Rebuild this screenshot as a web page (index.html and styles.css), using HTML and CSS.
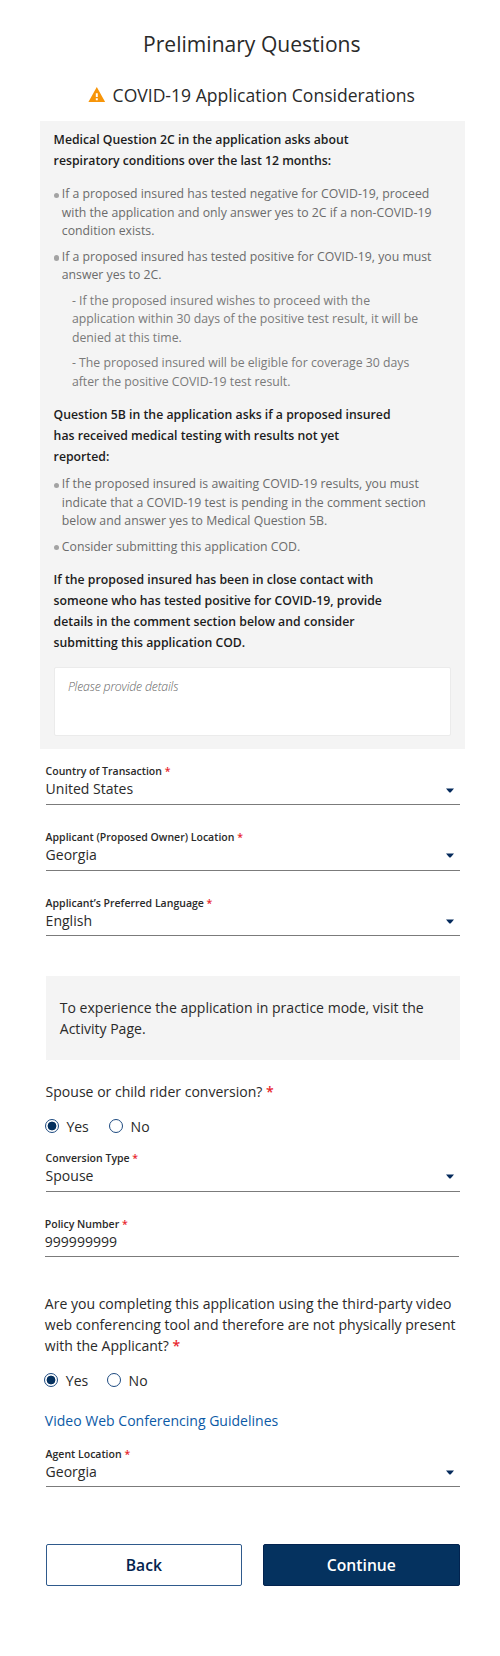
FILE: index.html
```html
<!DOCTYPE html>
<html lang="en">
<head>
<meta charset="utf-8">
<title>Preliminary Questions</title>
<link rel="stylesheet" href="styles.css">
</head>
<body>
<main class="page">
  <h1 class="title">Preliminary Questions</h1>
  <h2 class="heading">
    <svg class="warn" viewBox="0 0 18 16" aria-hidden="true"><path fill="#f79509" fill-rule="evenodd" d="M9 0 18 16H0ZM8 6.2V10.2H10V6.2ZM8 11.5V13.5H10V11.5Z"/></svg>
    <span>COVID-19 Application Considerations</span>
  </h2>

  <section class="panel">
    <p class="lead">Medical Question 2C in the application asks about<br>respiratory conditions over the last 12 months:</p>
    <ul class="list list-first">
      <li class="item">If a proposed insured has tested negative for COVID-19, proceed<br>with the application and only answer yes to 2C if a non-COVID-19<br>condition exists.</li>
      <li class="item">If a proposed insured has tested positive for COVID-19, you must<br>answer yes to 2C.</li>
      <li class="sub">- If the proposed insured wishes to proceed with the<br>application within 30 days of the positive test result, it will be<br>denied at this time.</li>
      <li class="sub">- The proposed insured will be eligible for coverage 30 days<br>after the positive COVID-19 test result.</li>
    </ul>
    <p class="lead">Question 5B in the application asks if a proposed insured<br>has received medical testing with results not yet<br>reported:</p>
    <ul class="list">
      <li class="item">If the proposed insured is awaiting COVID-19 results, you must<br>indicate that a COVID-19 test is pending in the comment section<br>below and answer yes to Medical Question 5B.</li>
      <li class="item">Consider submitting this application COD.</li>
    </ul>
    <p class="lead">If the proposed insured has been in close contact with<br>someone who has tested positive for COVID-19, provide<br>details in the comment section below and consider<br>submitting this application COD.</p>
    <textarea class="details" placeholder="Please provide details"></textarea>
  </section>

  <form class="form">
    <div class="fields">
      <div class="field"><div class="label">Country of Transaction <b class="req">*</b></div><div class="value">United States<svg class="caret" viewBox="0 0 8 5"><path d="M0 .5H8L4.8 4.2Q4 5 3.2 4.2Z"/></svg></div></div>
      <div class="field"><div class="label">Applicant (Proposed Owner) Location <b class="req">*</b></div><div class="value">Georgia<svg class="caret" viewBox="0 0 8 5"><path d="M0 .5H8L4.8 4.2Q4 5 3.2 4.2Z"/></svg></div></div>
      <div class="field"><div class="label">Applicant’s Preferred Language <b class="req">*</b></div><div class="value">English<svg class="caret" viewBox="0 0 8 5"><path d="M0 .5H8L4.8 4.2Q4 5 3.2 4.2Z"/></svg></div></div>
    </div>

    <p class="notice">To experience the application in practice mode, visit the<br>Activity Page.</p>

    <p class="question">Spouse or child rider conversion? <b class="req">*</b></p>
    <div class="radios">
      <label class="option"><input class="radio" type="radio" name="rider" checked>Yes</label>
      <label class="option"><input class="radio" type="radio" name="rider">No</label>
    </div>

    <div class="fields">
      <div class="field"><div class="label">Conversion Type <b class="req">*</b></div><div class="value">Spouse<svg class="caret" viewBox="0 0 8 5"><path d="M0 .5H8L4.8 4.2Q4 5 3.2 4.2Z"/></svg></div></div>
      <div class="field field-policy"><div class="label">Policy Number <b class="req">*</b></div><div class="value">999999999</div></div>
    </div>

    <p class="question question-video">Are you completing this application using the third-party video<br>web conferencing tool and therefore are not physically present<br>with the Applicant? <b class="req">*</b></p>
    <div class="radios radios-video">
      <label class="option"><input class="radio" type="radio" name="video" checked>Yes</label>
      <label class="option"><input class="radio" type="radio" name="video">No</label>
    </div>
    <a class="link" href="#">Video Web Conferencing Guidelines</a>

    <div class="field"><div class="label">Agent Location <b class="req">*</b></div><div class="value">Georgia<svg class="caret" viewBox="0 0 8 5"><path d="M0 .5H8L4.8 4.2Q4 5 3.2 4.2Z"/></svg></div></div>

    <div class="actions">
      <button class="btn" type="button">Back</button>
      <button class="btn btn-primary" type="button">Continue</button>
    </div>
  </form>
</main>
</body>
</html>
```
FILE: styles.css
```css
* { box-sizing: border-box; }

body {
  margin: 0;
  background: #fff;
  color: #2a2a2a;
  font-family: "Open Sans", sans-serif;
  font-size: 14.04px;
}

h1, h2, p, ul { margin: 0; padding: 0; font-weight: 400; }
ul { list-style: none; }

.page { width: 500px; height: 1656px; padding: 30px 35px 0 40px; white-space: nowrap; }

.title { font-size: 21.07px; line-height: 28px; text-align: center; padding-right: 1.4px; }

.heading {
  display: flex;
  align-items: center;
  gap: 7.3px;
  margin-top: 25px;
  padding-left: 47.7px;
  font-size: 17.56px;
  line-height: 24px;
}
.warn { width: 17.6px; height: 15.8px; margin-bottom: 1px; }

.panel {
  margin-top: 14px;
  height: 627.7px;
  padding: 7.5px 14px 0 13.6px;
  background: #f4f4f4;
  font-size: 12.28px;
}
.lead { color: #1c1c1c; font-weight: 600; line-height: 21.07px; }
.list {
  display: flex;
  flex-direction: column;
  gap: 7px;
  margin: 8.6px 0 12.6px;
  color: #6b6b6b;
  line-height: 18.45px;
}
.list-first { margin-top: 14.8px; }
.item { position: relative; padding-left: 8.2px; }
.item::before {
  content: "";
  position: absolute;
  left: 0;
  top: 7.6px;
  width: 5.2px;
  height: 5.2px;
  border-radius: 50%;
  background: #a3a3a3;
}
.sub { padding-left: 18.3px; color: #7a7a7a; }

.details {
  display: block;
  width: 397.4px;
  height: 68.4px;
  margin-top: 14.2px;
  padding: 9.5px 13.3px;
  border: 1px solid #ebebeb;
  border-radius: 2px;
  background: #fff;
  resize: none;
  outline: 0;
  font: italic 300 12.28px/18.4px "Open Sans", sans-serif;
  letter-spacing: -0.19px;
}
.details::placeholder { color: #666; opacity: 1; }

.form { padding: 15.3px 0 0 5.6px; width: 419.6px; }

.fields { display: flex; flex-direction: column; gap: 25px; }
.field { height: 40.8px; border-bottom: 1px solid #7b7b7b; }
.field-policy { position: relative; left: -0.8px; }
.label { font-size: 10.53px; font-weight: 600; line-height: 14px; }
.req { color: #e8262d; font-weight: 600; }
.value {
  display: flex;
  justify-content: space-between;
  align-items: center;
  margin-top: 1.4px;
  padding-right: 5.6px;
  line-height: 20px;
}
.caret { width: 8px; height: 5px; margin-top: 1.4px; fill: #052a5c; }

.notice {
  margin-top: 39.6px;
  height: 84px;
  padding: 21.2px 14.2px;
  background: #f4f4f4;
  line-height: 21px;
}
.question { margin-top: 21.3px; line-height: 21.07px; }
.question-video { margin: 35.3px 0 0 -0.8px; }

.radios { display: flex; gap: 20.4px; margin: 14.4px 0 14px -0.6px; line-height: 20px; }
.radios-video { margin: 15.1px 0 20.6px -1.2px; gap: 19px; }
.option { display: flex; align-items: center; gap: 7.4px; }
.radio {
  appearance: none;
  width: 14px;
  height: 14px;
  margin: -2px 0 0;
  border: 1px solid #1d4a80;
  border-radius: 50%;
  background: #fff;
}
.radio:checked { background: radial-gradient(circle, #04305e 4.1px, #fff 4.7px); }

.link {
  display: block;
  margin: 0 0 15.2px -0.8px;
  color: #0c5aa6;
  line-height: 20px;
  text-decoration: none;
}

.actions { display: grid; grid-template-columns: 1fr 1fr; gap: 21px; margin-top: 56.4px; }
.btn {
  height: 42.2px;
  padding: 1px 0 0;
  border: 1px solid #2f5a8c;
  border-radius: 2px;
  background: #fff;
  color: #03234f;
  font: 600 15.7px/21px "Open Sans", sans-serif;
}
.btn-primary { border-color: #03234f; background: #05325f; color: #fff; }
```
